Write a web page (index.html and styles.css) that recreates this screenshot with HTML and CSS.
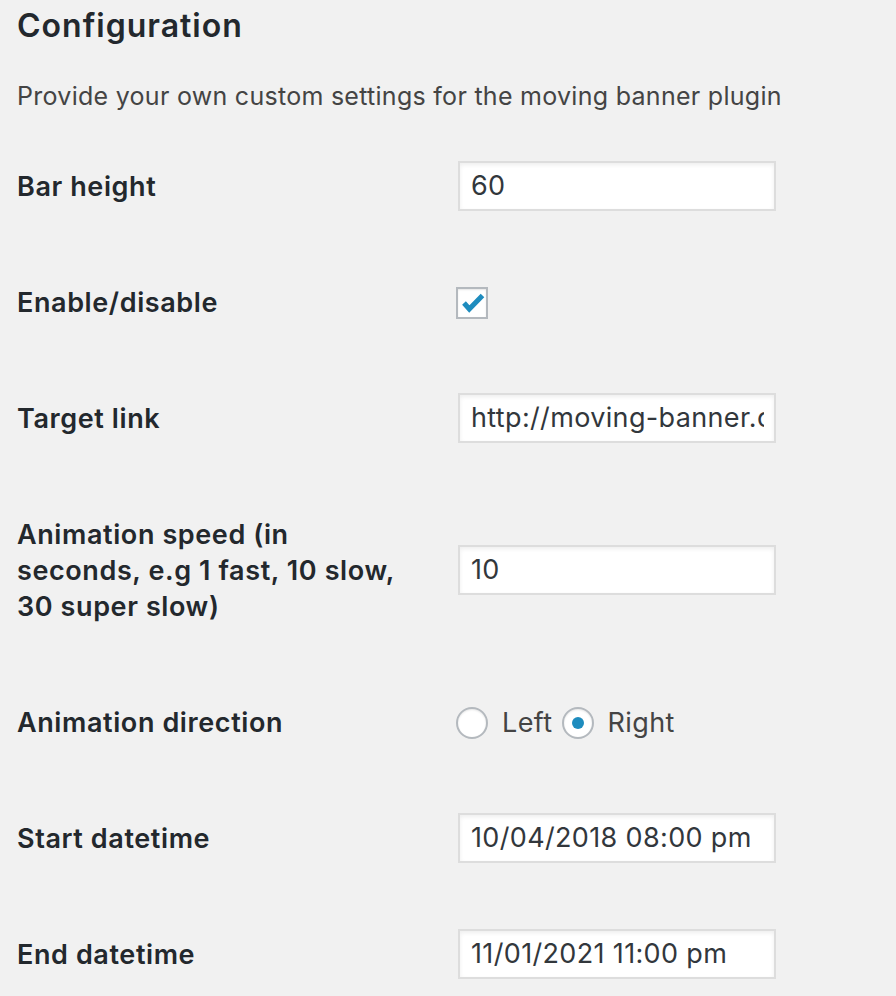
FILE: index.html
```html
<!DOCTYPE html>
<html lang="en">
<head>
<meta charset="utf-8">
<title>Configuration</title>
<link rel="stylesheet" href="styles.css">
</head>
<body>
<div class="wrap">
  <h2 class="title">Configuration</h2>
  <p class="description">Provide your own custom settings for the moving banner plugin</p>
  <div class="form-table">
    <div class="th">Bar height</div>
    <div class="td"><input class="regular-text" type="text" value="60"></div>

    <div class="th">Enable/disable</div>
    <div class="td">
      <span class="checkbox">
        <svg viewBox="0 0 32 32" width="32" height="32" aria-hidden="true"><polyline points="8,16 13.3,22 26.5,8.5" fill="none" stroke="#1e8cbe" stroke-width="5" stroke-linejoin="miter" stroke-linecap="butt"/></svg>
      </span>
    </div>

    <div class="th">Target link</div>
    <div class="td"><input class="regular-text" type="text" value="http://moving-banner.com/"></div>

    <div class="th">Animation speed (in seconds, e.g 1 fast, 10 slow, 30 super slow)</div>
    <div class="td"><input class="regular-text" type="text" value="10"></div>

    <div class="th">Animation direction</div>
    <div class="td">
      <div class="radios">
        <span class="radio"></span><span class="radio-label">Left</span>
        <span class="radio checked"><span class="dot"></span></span><span class="radio-label">Right</span>
      </div>
    </div>

    <div class="th">Start datetime</div>
    <div class="td"><input class="regular-text" type="text" value="10/04/2018 08:00 pm"></div>

    <div class="th">End datetime</div>
    <div class="td"><input class="regular-text" type="text" value="11/01/2021 11:00 pm"></div>
  </div>
</div>
</body>
</html>
```

FILE: styles.css
```css
html, body {
  margin: 0;
  padding: 0;
  background: #f1f1f1;
}
body {
  font-family: Inter, "Noto Sans", "Liberation Sans", sans-serif;
  color: #23282d;
  overflow: hidden;
}
.wrap {
  padding: 0 0 0 17px;
}
.title {
  margin: 0;
  padding-top: 7px;
  font-size: 32px;
  line-height: 38px;
  font-weight: 600;
  letter-spacing: 1px;
  color: #23282d;
}
.description {
  margin: 33px 0 0;
  font-size: 25px;
  line-height: 36px;
  letter-spacing: 0.28px;
  color: #444;
}
.form-table {
  display: grid;
  grid-template-columns: 441px 1fr;
  margin-top: 15px;
}
.th {
  padding: 40px 55px 40px 0;
  font-size: 27px;
  line-height: 36px;
  font-weight: 600;
  letter-spacing: 0.6px;
  color: #23282d;
}
.td {
  align-self: center;
  display: flex;
  align-items: center;
  padding-bottom: 3px;
}
.regular-text {
  box-sizing: border-box;
  width: 318px;
  height: 50px;
  margin: 0;
  padding: 0 10px 0 11px;
  border: 2px solid #ddd;
  background: #fff;
  box-shadow: inset 0 2px 4px rgba(0,0,0,0.07);
  font-family: Inter, "Noto Sans", "Liberation Sans", sans-serif;
  font-size: 27px;
  letter-spacing: 0.35px;
  color: #32373c;
  outline: none;
}
.checkbox {
  box-sizing: border-box;
  width: 32px;
  height: 32px;
  margin-left: -2px;
  margin-bottom: -3px;
  border: 2px solid #b4b9be;
  background: #fff;
  box-shadow: inset 0 1px 2px rgba(0,0,0,0.1);
  position: relative;
}
.checkbox svg {
  position: absolute;
  left: -2px;
  top: -2px;
}
.radios {
  display: flex;
  align-items: center;
  margin-left: -2px;
  margin-bottom: -3px;
}
.radio {
  box-sizing: border-box;
  width: 32px;
  height: 32px;
  border: 2px solid #b4b9be;
  border-radius: 50%;
  background: #fff;
  box-shadow: inset 0 1px 2px rgba(0,0,0,0.1);
  display: flex;
  align-items: center;
  justify-content: center;
}
.dot {
  width: 12px;
  height: 12px;
  border-radius: 50%;
  background: #1e8cbe;
}
.radio-label {
  font-size: 27px;
  line-height: 36px;
  letter-spacing: 0.4px;
  color: #444;
  margin: 0 9px 0 14px;
}
```
